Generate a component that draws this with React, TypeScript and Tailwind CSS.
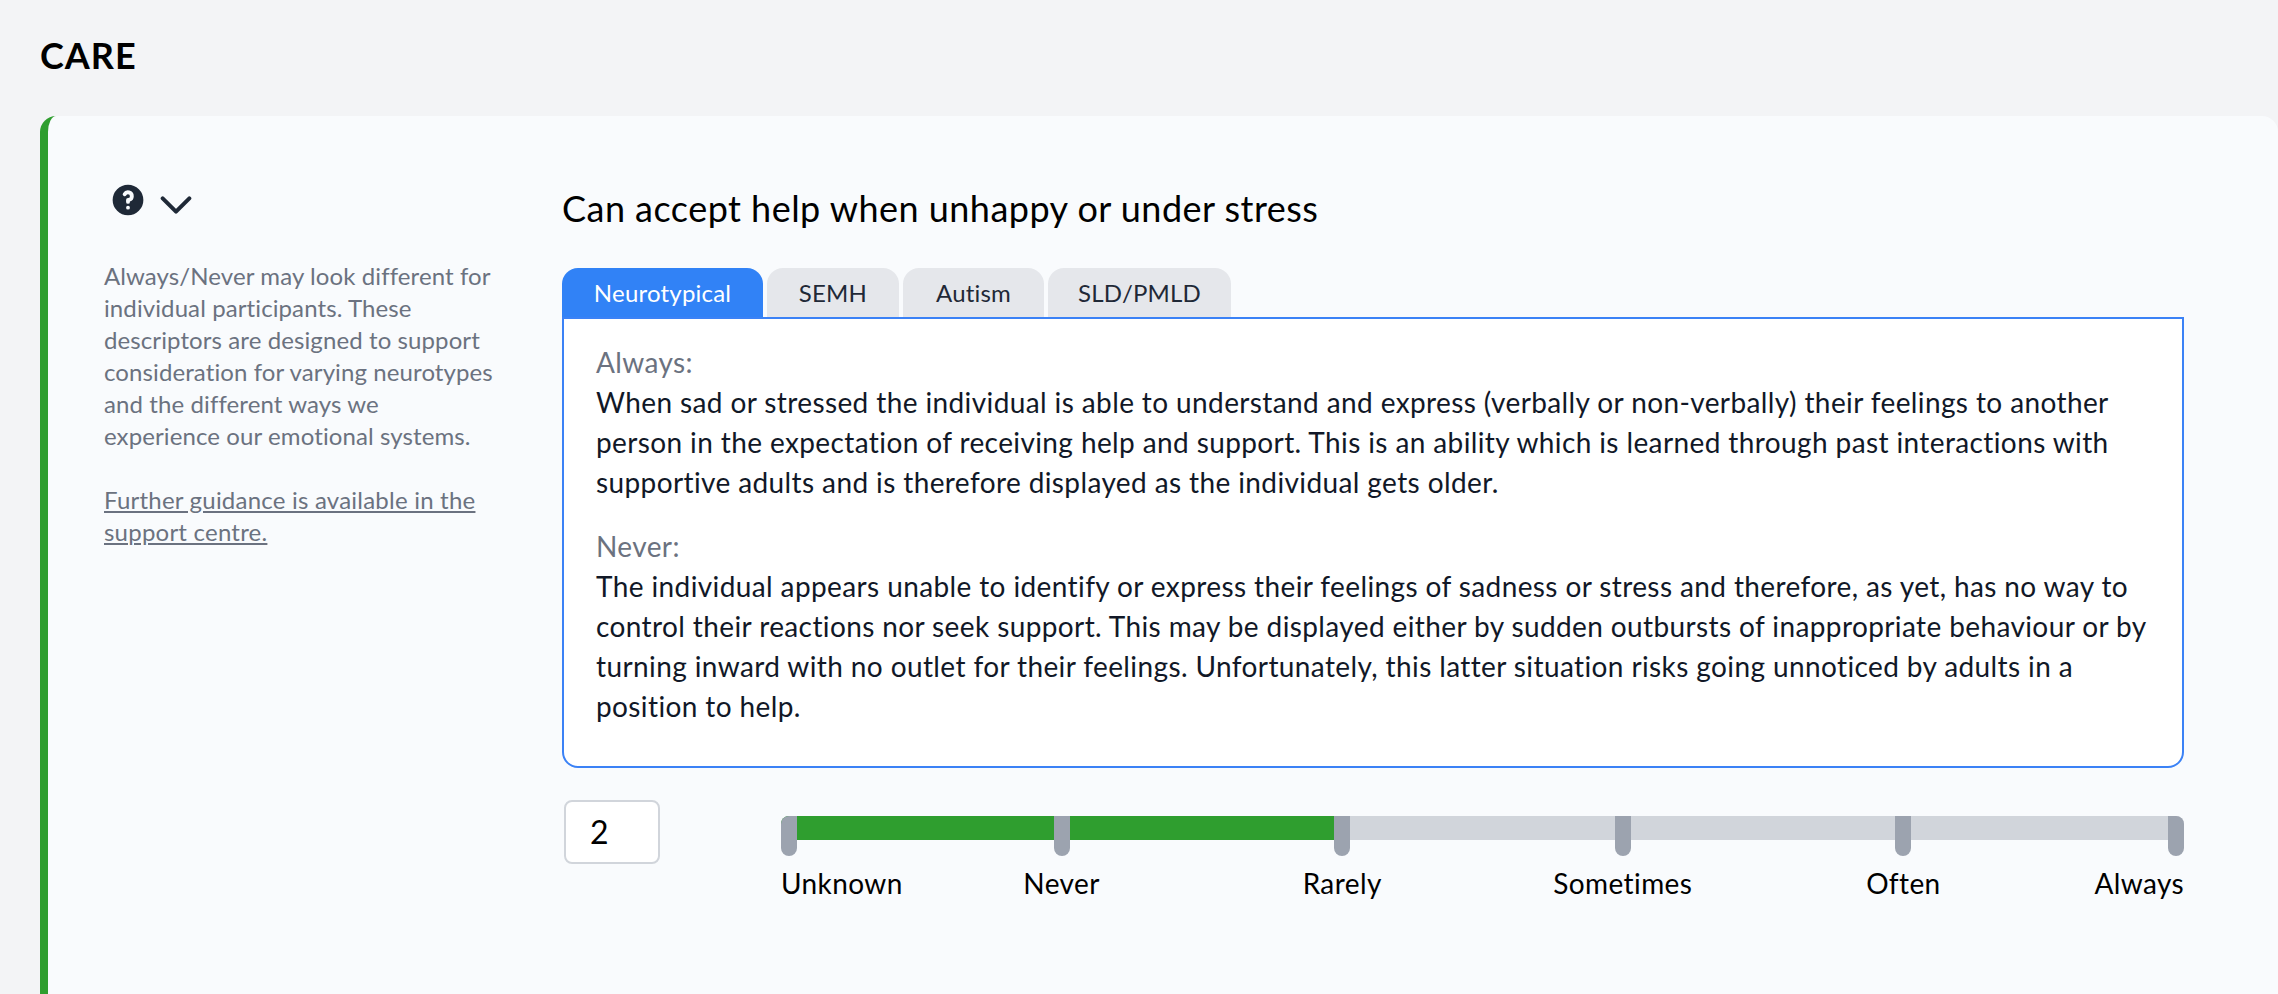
const font = "font-['Lato','Liberation_Sans',sans-serif]";

const ticks = [
  { label: "Unknown", tick: "left-0 rounded-tl-lg", text: "left-0" },
  { label: "Never", tick: "left-[20%] -translate-x-1/2", text: "left-[20%] -translate-x-1/2" },
  { label: "Rarely", tick: "left-[40%] -translate-x-1/2", text: "left-[40%] -translate-x-1/2" },
  { label: "Sometimes", tick: "left-[60%] -translate-x-1/2", text: "left-[60%] -translate-x-1/2" },
  { label: "Often", tick: "left-[80%] -translate-x-1/2", text: "left-[80%] -translate-x-1/2" },
  { label: "Always", tick: "right-0 rounded-tr-lg", text: "right-0" },
];

const tabs = [
  { label: "SEMH", width: "w-[132px]" },
  { label: "Autism", width: "w-[141px]" },
  { label: "SLD/PMLD", width: "w-[183px]" },
];

export default function App() {
  return (
    <div className={`${font} h-[994px] overflow-hidden bg-[#f3f4f6] pl-10 text-black`}>
      <h1 className="pt-[28px] pb-[34px] text-[36px] leading-[54px] font-bold tracking-[1px]">CARE</h1>
      <div className="flex h-[878px] rounded-t-2xl border-l-8 border-[#2f9e2f] bg-[#f9fbfd]">
        <aside className="w-[514px] shrink-0 pl-[56px] pt-[68px]">
          <div className="flex items-start gap-4 pl-[8px]">
            <svg width="32" height="32" viewBox="0 0 20 20" fill="#1f2937">
              <path
                fillRule="evenodd"
                clipRule="evenodd"
                d="M18 10a8 8 0 11-16 0 8 8 0 0116 0zm-8-3a1 1 0 00-.867.5 1 1 0 11-1.731-1A3 3 0 0113 8a3.001 3.001 0 01-2 2.83V11a1 1 0 11-2 0v-1a1 1 0 011-1 1 1 0 100-2zm0 8a1 1 0 100-2 1 1 0 000 2z"
                transform="translate(-2 -2) scale(1.2)"
              />
            </svg>
            <svg width="32" height="32" viewBox="0 0 24 24" fill="none" stroke="#1f2937" strokeWidth="3" strokeLinecap="round" strokeLinejoin="round" className="mt-[5px]">
              <path d="M2 7l10 10 10-10" />
            </svg>
          </div>
          <p className="mt-[39px] w-[394px] text-[24px] leading-8 tracking-[0.1px] text-[#6b7280]">
            Always/Never may look different for individual participants. These descriptors are designed to support consideration for varying neurotypes and the different ways we experience our emotional systems.
          </p>
          <p className="mt-8 w-[394px] text-[24px] leading-8 tracking-[0.22px] text-[#6b7280] underline">
            Further guidance is available in the support centre.
          </p>
        </aside>
        <main className="w-[1622px] shrink-0 pt-[67px]">
          <h2 className="text-[36px] leading-[50px] tracking-[0.47px]">Can accept help when unhappy or under stress</h2>
          <div className="mt-[35px] flex gap-1 text-[24px] leading-8 tracking-[0.2px]">
            <div className="h-[49px] w-[201px] rounded-t-2xl bg-[#3182f6] pt-[9px] text-center text-white">Neurotypical</div>
            {tabs.map((t) => (
              <div key={t.label} className={`h-[49px] rounded-t-2xl bg-[#e5e7eb] pt-[9px] text-center text-[#1f2937] ${t.width}`}>{t.label}</div>
            ))}
          </div>
          <div className="h-[451px] rounded-b-2xl border-2 border-[#3b82f6] bg-white px-8 pt-[23px] text-[28px] leading-10 tracking-[0.39px]">
            <p className="text-[#6b7280]">Always:</p>
            <p className="text-[#111827]">
              When sad or stressed the individual is able to understand and express (verbally or non-verbally) their feelings to another person in the expectation of receiving help and support. This is an ability which is learned through past interactions with supportive adults and is therefore displayed as the individual gets older.
            </p>
            <p className="mt-6 text-[#6b7280]">Never:</p>
            <p className="text-[#111827]">
              The individual appears unable to identify or express their feelings of sadness or stress and therefore, as yet, has no way to control their reactions nor seek support. This may be displayed either by sudden outbursts of inappropriate behaviour or by turning inward with no outlet for their feelings. Unfortunately, this latter situation risks going unnoticed by adults in a position to help.
            </p>
          </div>
          <div className="mt-8 flex pl-0.5">
            <div className="h-[64px] w-[96px] shrink-0 rounded-lg border-2 border-[#d1d5db] bg-white pl-6 text-[32px] leading-[60px]">2</div>
            <div className="relative ml-[121px] mt-4 h-[80px] flex-1">
              <div className="h-6 overflow-hidden rounded-lg bg-[#d1d5db]">
                <div className="h-full w-[40%] bg-[#2f9e2f]" />
              </div>
              {ticks.map((t) => (
                <div key={t.label}>
                  <div className={`absolute top-0 h-10 w-4 rounded-b-lg bg-[#9ca3af] ${t.tick}`} />
                  <div className={`absolute top-[51px] text-[28px] leading-8 tracking-[0.4px] ${t.text}`}>{t.label}</div>
                </div>
              ))}
            </div>
          </div>
        </main>
      </div>
    </div>
  );
}
